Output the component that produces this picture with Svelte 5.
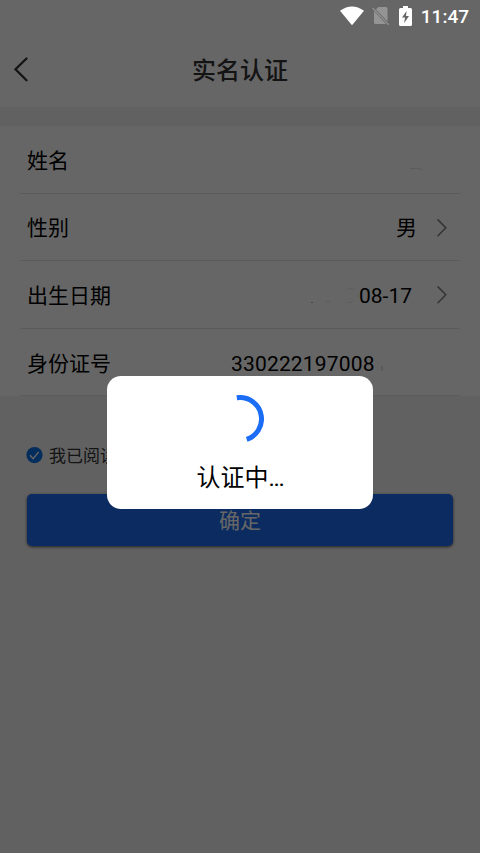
<script lang="ts">
	type Field = {
		label: string;
		value: string;
		kind: "name" | "choice" | "date" | "number";
	};

	const fields: Field[] = [
		{ label: "姓名", value: "", kind: "name" },
		{ label: "性别", value: "男", kind: "choice" },
		{ label: "出生日期", value: "08-17", kind: "date" },
		{ label: "身份证号", value: "330222197008", kind: "number" },
	];

	let loading = $state(true);
	let agreed = $state(true);
</script>

<div class="screen">
	<header class="nav">
		<svg class="back" width="16" height="26" viewBox="0 0 16 26" aria-hidden="true">
			<path d="M13.5 1.5 2.5 12.3l11 10.9" />
		</svg>
		<h1>实名认证</h1>
	</header>

	<section class="form">
		{#each fields as field}
			<div class="row">
				<span class="label">{field.label}</span>
				<span class="value {field.kind}">
					{#if field.kind === "name"}
						<svg class="trace" width="50" height="20" viewBox="0 0 50 20" aria-hidden="true">
							<path d="M30 17.5q7-1.2 13 1.2" />
						</svg>
					{:else if field.kind === "date"}
						<svg class="trace" width="50" height="20" viewBox="0 0 50 20" aria-hidden="true">
							<path class="speck" d="M2 16.5h2" />
							<path d="M17 15q2 2 4 0M39 3.5q4-3 6 1M39 16q3 2 5-1M47 10h2" />
						</svg>
					{/if}
					{field.value}
				</span>
				{#if field.kind === "number"}
					<svg class="trace dot" width="3" height="20" viewBox="0 0 3 20" aria-hidden="true">
						<path d="M1 12v5" />
					</svg>
				{/if}
				{#if field.kind === "choice" || field.kind === "date"}
					<svg class="chevron" width="12" height="20" viewBox="0 0 12 20" aria-hidden="true">
						<path d="M2 2.9 9.8 10.8 2 18.7" />
					</svg>
				{/if}
			</div>
		{/each}
	</section>

	<div class="agreement">
		<svg width="17" height="17" viewBox="0 0 17 17" aria-hidden="true">
			<circle cx="8.5" cy="8.1" r="8.1" />
			{#if agreed}
				<path d="m4 8.3 3.2 3.4 5.5-6.8" />
			{/if}
		</svg>
		<span class="terms">我已阅读</span>
	</div>

	<button class="submit" type="button">确定</button>

	{#if loading}
		<div class="mask">
			<div class="dialog" role="status">
				<svg class="spinner" width="48" height="48" viewBox="0 0 48 48" aria-hidden="true">
					<circle
						cx="24"
						cy="24"
						r="21.5"
						pathLength="360"
						stroke-dasharray="170 360"
						transform="rotate(-98.5 24 24)"
					/>
				</svg>
				<span>认证中<span class="ellipsis">...</span></span>
			</div>
		</div>
	{/if}

	<div class="status-bar">
		<svg class="wifi" width="24" height="20" viewBox="0 0 24 20" aria-hidden="true">
			<path d="M0 4.7Q12-3.8 24 4.7L12 19.2Z" />
		</svg>
		<svg class="sim" width="18" height="20" viewBox="0 0 18 20" aria-hidden="true">
			<path class="card" d="M6.2 1H14q1.5 0 1.5 1.5v13L3.9 3.4ZM2 5 14 18H3.5Q2 18 2 16.5Z" />
			<path class="slash" d="m.6 2 16.2 16.8" />
		</svg>
		<svg class="battery" width="13" height="20" viewBox="0 0 13 20" aria-hidden="true">
			<path d="M4 0h5v2h2.5Q13 2 13 3.5v15q0 1.5-1.5 1.5h-10Q0 20 0 18.5v-15Q0 2 1.5 2H4Z" />
			<path class="bolt" d="M7.6 5 3 11.6h3L5.2 17 10 10H7Z" />
		</svg>
		<time>11:47</time>
	</div>
</div>

<style>
	:global(body) {
		margin: 0;
	}

	.screen {
		position: relative;
		box-sizing: border-box;
		height: 853px;
		padding-top: 32px;
		overflow: hidden;
		background: #f2f2f2;
		font-family: Roboto, "Noto Sans CJK SC", sans-serif;
		color: #000;
	}

	.screen::before {
		content: "";
		display: block;
		height: 32px;
		margin-top: -32px;
		background: #fff;
	}

	svg {
		flex: none;
		fill: none;
	}

	.nav {
		display: grid;
		grid-template-columns: 1fr auto 1fr;
		align-items: center;
		box-sizing: border-box;
		height: 75px;
		padding: 1px 13px 0;
		background: #fff;
	}

	.back {
		stroke: #333;
		stroke-width: 2.3;
		stroke-linecap: round;
	}

	h1 {
		margin: 0;
		padding-top: 2px;
		font-size: 24px;
		font-weight: 500;
		line-height: 32px;
		color: #333;
	}

	.form {
		margin-top: 19px;
		padding: 0 20px;
		background: #fff;
	}

	.row {
		display: flex;
		align-items: center;
		box-sizing: border-box;
		height: 67.6px;
		padding: 0 12px 0 7px;
		border-bottom: 1px solid #e4e4e4;
		font-size: 21px;
		line-height: 30px;
	}

	.label,
	.value {
		padding-top: 3px;
	}

	.value {
		display: flex;
		align-items: center;
		margin-left: auto;
	}

	.name {
		margin-right: 18px;
	}

	.choice {
		margin-right: 19px;
	}

	.date {
		margin-right: 24px;
	}

	.number {
		margin-left: 120px;
		letter-spacing: 0.17px;
	}

	.trace {
		stroke: #e2e2e2;
	}

	.speck {
		stroke: #b0b0b0;
	}

	.dot {
		margin-left: 6px;
		padding-top: 3px;
		stroke: #c4c4c4;
	}

	.chevron {
		stroke: #858585;
		stroke-width: 1.6;
		stroke-linecap: round;
	}

	.agreement {
		display: flex;
		align-items: center;
		gap: 6px;
		margin-top: 46px;
		padding-left: 26px;
		font-size: 17px;
		line-height: 26px;
		color: #333;
	}

	.terms {
		height: 25px;
		padding-top: 1px;
	}

	.agreement circle {
		fill: #0872e8;
	}

	.agreement path {
		stroke: #fff;
		stroke-width: 1.4;
	}

	.submit {
		display: block;
		width: 426px;
		height: 52px;
		margin: 26px 27px 0;
		padding: 2px 0 0;
		border: 0;
		border-radius: 5px;
		background: #1e6cf0;
		box-shadow: 0 1px 3px rgb(0 0 0 / 65%);
		font: inherit;
		font-size: 21px;
		line-height: 50px;
		color: #fff;
	}

	.mask {
		position: absolute;
		inset: 0;
		display: flex;
		align-items: center;
		justify-content: center;
		padding-top: 32px;
		background: rgb(0 0 0 / 60%);
	}

	.dialog {
		display: flex;
		flex-direction: column;
		align-items: center;
		box-sizing: border-box;
		width: 266px;
		height: 133px;
		padding-top: 19px;
		border-radius: 14px;
		background: #fff;
		font-size: 24px;
		line-height: 34px;
	}

	.spinner {
		margin-bottom: 18px;
		stroke: #1a6df4;
		stroke-width: 5;
	}

	.ellipsis {
		letter-spacing: -1.3px;
	}

	.status-bar {
		position: absolute;
		top: 0;
		left: 0;
		right: 0;
		display: flex;
		align-items: center;
		justify-content: flex-end;
		height: 32px;
		padding-right: 11px;
		color: #fff;
	}

	.wifi,
	.battery {
		fill: #fff;
	}

	.sim {
		margin: 0 9px 0 8px;
	}

	.card {
		fill: #949494;
	}

	.slash {
		stroke: #949494;
		stroke-width: 1.2;
	}

	.bolt {
		fill: #666;
	}

	time {
		margin-left: 9px;
		padding-top: 2px;
		font-size: 19px;
		font-weight: 500;
		line-height: 32px;
	}
</style>
